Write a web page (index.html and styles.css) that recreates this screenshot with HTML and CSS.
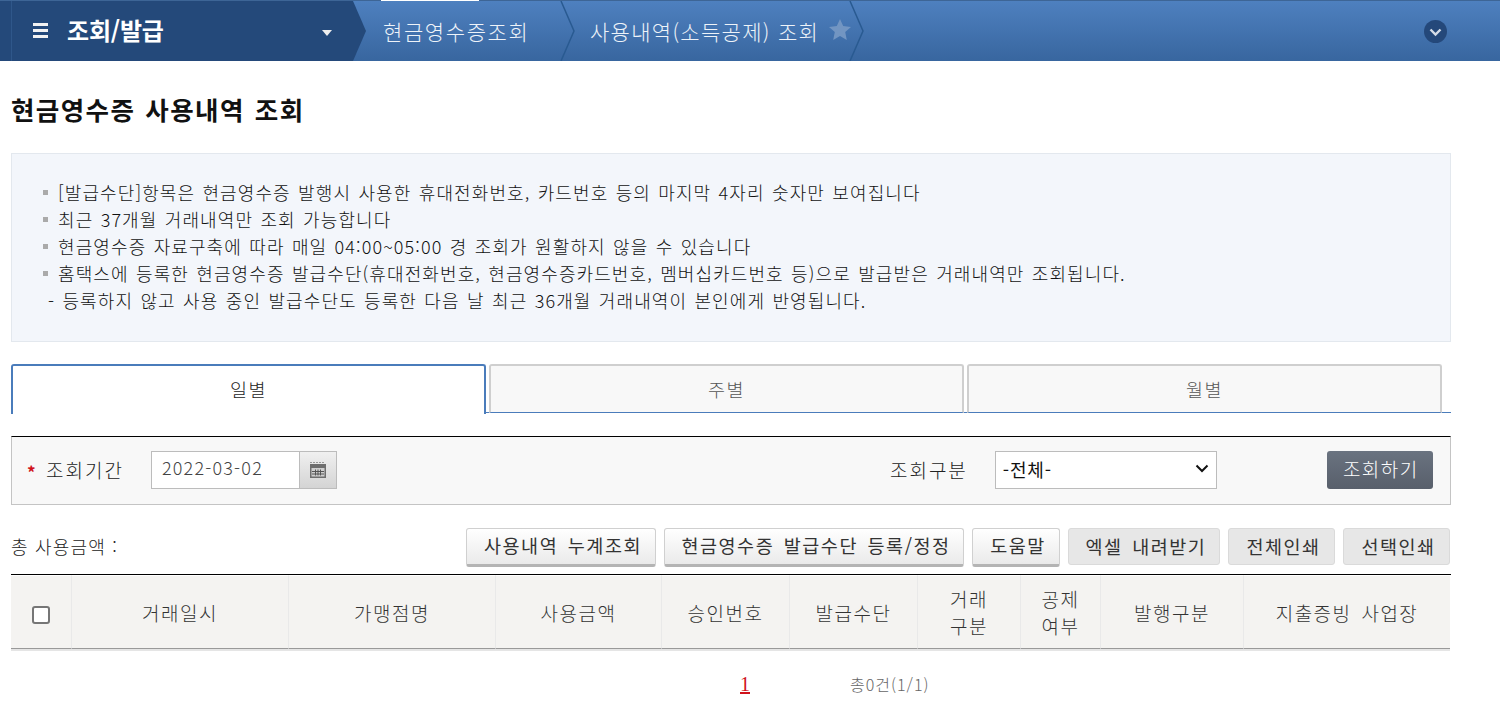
FILE: index.html
```html
<!DOCTYPE html>
<html lang="ko">
<head>
<meta charset="utf-8">
<title>현금영수증 사용내역 조회</title>
<link rel="stylesheet" href="styles.css">
</head>
<body>
<header class="topbar">
  <div class="menu">
    <span class="burger"><i></i><i></i><i></i></span>
    <span class="menu-title">조회/발급</span>
    <span class="caret"></span>
    <svg class="menu-tip" width="14" height="60" viewBox="0 0 14 60"><path d="M0 0 L13 30 L0 60 Z" fill="#24497a"/></svg>
  </div>
  <div class="crumb crumb-a">
    <span>현금영수증조회</span>
    <svg class="sep" width="16" height="60" viewBox="0 0 16 60"><path d="M1 0 L14 30 L1 60" fill="none" stroke="#295a91" stroke-width="1.5"/></svg>
  </div>
  <div class="crumb crumb-b">
    <span>사용내역(소득공제) 조회</span>
    <svg class="star" width="22" height="21" viewBox="0 0 22 21"><path d="M11 0 L14.2 7 L22 7.9 L16.2 13 L17.8 21 L11 17 L4.2 21 L5.8 13 L0 7.9 L7.8 7 Z" fill="#7295c2"/></svg>
    <svg class="sep" width="16" height="60" viewBox="0 0 16 60"><path d="M1 0 L14 30 L1 60" fill="none" stroke="#295a91" stroke-width="1.5"/></svg>
  </div>
  <svg class="more" width="23" height="23" viewBox="0 0 23 23"><circle cx="11.5" cy="11.5" r="11.5" fill="#24487a"/><path d="M6.5 9.5 L11.5 14.5 L16.5 9.5" fill="none" stroke="#d5dde8" stroke-width="2.4"/></svg>
</header>
<main class="page">
  <h1 class="title">현금영수증 사용내역 조회</h1>
  <section class="notice">
    <ul>
      <li>[발급수단]항목은 현금영수증 발행시 사용한 휴대전화번호, 카드번호 등의 마지막 4자리 숫자만 보여집니다</li>
      <li>최근 37개월 거래내역만 조회 가능합니다</li>
      <li>현금영수증 자료구축에 따라 매일 04:00~05:00 경 조회가 원활하지 않을 수 있습니다</li>
      <li>홈택스에 등록한 현금영수증 발급수단(휴대전화번호, 현금영수증카드번호, 멤버십카드번호 등)으로 발급받은 거래내역만 조회됩니다.</li>
      <li class="sub">- 등록하지 않고 사용 중인 발급수단도 등록한 다음 날 최근 36개월 거래내역이 본인에게 반영됩니다.</li>
    </ul>
  </section>
  <nav class="tabs">
    <a class="tab on">일별</a>
    <a class="tab">주별</a>
    <a class="tab">월별</a>
  </nav>
  <section class="search">
    <span class="req">*</span>
    <label class="lbl">조회기간</label>
    <span class="datefield">2022-03-02</span>
    <span class="calbtn">
      <svg width="18" height="18" viewBox="0 0 18 18"><rect x="1" y="3" width="16" height="14" fill="#6e6e6e"/><rect x="2.5" y="7" width="13" height="8.5" fill="#cfcfcf"/><path d="M3 10.5h12M3 13h12M6.5 8.5v6M9 8.5v6M11.5 8.5v6" stroke="#555" stroke-width="1"/><path d="M2 1v1M5 1v1M8 1v1M11 1v1M14 1v1" stroke="#777" stroke-width="1.4"/></svg>
    </span>
    <label class="lbl lbl-type">조회구분</label>
    <span class="selectbox">-전체-
      <svg width="14" height="9" viewBox="0 0 14 9"><path d="M1.5 1.5 L7 7 L12.5 1.5" fill="none" stroke="#111" stroke-width="2"/></svg>
    </span>
    <button class="go">조회하기</button>
  </section>
  <div class="toolbar">
    <span class="total">총 사용금액 :</span>
    <button class="btn w190">사용내역 누계조회</button>
    <button class="btn w300">현금영수증 발급수단 등록/정정</button>
    <button class="btn w88">도움말</button>
    <button class="btn flat w152">엑셀 내려받기</button>
    <button class="btn flat w107">전체인쇄</button>
    <button class="btn flat w107">선택인쇄</button>
  </div>
  <div class="gridwrap">
    <table class="grid">
      <thead>
        <tr>
          <th class="c0"><span class="check"></span></th>
          <th class="c1">거래일시</th>
          <th class="c2">가맹점명</th>
          <th class="c3">사용금액</th>
          <th class="c4">승인번호</th>
          <th class="c5">발급수단</th>
          <th class="c6">거래<br>구분</th>
          <th class="c7">공제<br>여부</th>
          <th class="c8">발행구분</th>
          <th class="c9">지출증빙 사업장</th>
        </tr>
      </thead>
    </table>
  </div>
  <div class="pager">
    <a class="pnum">1</a>
    <span class="pinfo">총0건(1/1)</span>
  </div>
</main>
</body>
</html>
```
FILE: styles.css
```css
* { box-sizing: border-box; }
html, body { margin: 0; padding: 0; background: #fff; }
body {
  font-family: "Noto Sans CJK KR", "Liberation Sans", sans-serif;
  color: #222;
  overflow: hidden;
  font-size: 18px;
}
.topbar {
  position: relative;
  display: flex;
  height: 61px;
  background: linear-gradient(#4e80bf, #38669f);
  border-top: 1px solid #3d6596;
  color: #fff;
}
.topbar::before {
  content: "";
  position: absolute;
  left: 381px;
  top: -1px;
  width: 98px;
  height: 1px;
  background: #fff;
}
.menu {
  position: relative;
  display: flex;
  align-items: center;
  width: 353px;
  padding: 0 0 2px 33px;
  background: #24497a;
  border-left: 11px solid #24497a;
  box-shadow: inset 1px 0 0 #2f578a;
}
.burger { display: flex; flex-direction: column; gap: 3px; width: 15px; margin-left: -11px; }
.burger i { display: block; height: 3px; background: #f2f2f2; }
.menu-title { margin-left: 19px; font-size: 24px; font-weight: 700; letter-spacing: -0.2px; line-height: 1; }
.caret {
  position: absolute;
  left: 311px;
  top: 29px;
  border-left: 5.5px solid transparent;
  border-right: 5.5px solid transparent;
  border-top: 6px solid #eee;
}
.menu-tip { position: absolute; left: 342px; top: 0; }
.crumb {
  position: relative;
  display: flex;
  align-items: center;
  font-size: 21px;
  font-weight: 300;
  letter-spacing: 1.3px;
  color: #eef3f9;
  line-height: 1;
}
.crumb-a { width: 208px; margin-left: 13px; padding-left: 17px; letter-spacing: 1.6px; }
.crumb-b { width: 289px; padding-left: 16px; }
.sep { position: absolute; right: -2px; top: 0; }
.star { position: absolute; left: 255px; top: 18px; }
.more { margin: 19px 0 0 561px; }

.page { width: 1440px; margin-left: 11px; }
.title {
  margin: 29px 0 0;
  height: 37px;
  font-size: 25.5px;
  line-height: 37px;
  font-weight: 700;
  letter-spacing: 1.4px;
  word-spacing: 1.5px;
  color: #111;
}
.notice {
  margin-top: 26px;
  height: 189px;
  padding: 25px 0 0 31px;
  background: #f3f6fb;
  border: 1px solid #e3e8ee;
}
.notice ul { margin: 0; padding: 0; list-style: none; }
.notice li {
  position: relative;
  height: 27px;
  line-height: 27px;
  padding-left: 15px;
  font-size: 18px;
  font-weight: 300;
  letter-spacing: 1.1px;
  word-spacing: 1.2px;
  color: #111;
  white-space: nowrap;
}
.notice li::before {
  content: "";
  position: absolute;
  left: 0;
  top: 11px;
  width: 5px;
  height: 5px;
  background: #aaa;
}
.notice li.sub { padding-left: 5px; }
.notice li.sub::before { display: none; }

.tabs {
  display: flex;
  gap: 3px;
  height: 49px;
  margin-top: 22px;
  border-bottom: 1px solid #4a7cbb;
}
.tab {
  width: 475px;
  height: 49px;
  line-height: 46px;
  text-align: center;
  font-size: 18.5px;
  font-weight: 300;
  letter-spacing: 1.5px;
  color: #555;
  background: #f8f8f8;
  border: 2px solid #cfcfcf;
  border-bottom: 1px solid #4a7cbb;
  border-radius: 3px 3px 0 0;
}
.tab.on {
  height: 50px;
  color: #222;
  background: #fff;
  border: 2px solid #4a7cbb;
  border-bottom: 0;
}
.search {
  display: flex;
  align-items: center;
  height: 69px;
  margin-top: 23px;
  padding: 0 0 2px 15px;
  background: #f8f8f8;
  border: 1px solid #c4c4c4;
  border-top: 1px solid #000;
}
.req { width: 19px; color: #d0121b; font-size: 17px; font-weight: 700; line-height: 1; padding-top: 3px; }
.lbl { font-size: 19px; font-weight: 300; letter-spacing: 2px; color: #222; white-space: nowrap; }
.datefield {
  width: 149px;
  height: 38px;
  margin-left: 27px;
  padding-left: 10px;
  line-height: 30px;
  font-size: 18px;
  font-weight: 300;
  letter-spacing: 1.2px;
  color: #444;
  background: #fff;
  border: 1px solid #bcbcbc;
}
.calbtn {
  display: flex;
  align-items: center;
  justify-content: center;
  width: 37px;
  height: 38px;
  background: linear-gradient(#f0f0f0, #d4d4d4);
  border: 1px solid #bcbcbc;
  border-left: 0;
}
.lbl-type { margin-left: 553px; }
.selectbox {
  display: flex;
  align-items: center;
  justify-content: space-between;
  width: 222px;
  height: 38px;
  margin-left: 27px;
  padding: 0 7px 2px;
  font-size: 18px;
  font-weight: 400;
  letter-spacing: 0.8px;
  color: #111;
  background: #fff;
  border: 1px solid #bcbcbc;
}
.go {
  width: 106px;
  height: 38px;
  margin-left: 110px;
  padding: 0 0 2px 2px;
  font: 300 19px "Noto Sans CJK KR", sans-serif;
  letter-spacing: 1.5px;
  color: #fff;
  background: linear-gradient(#6a7380, #585f6b);
  border: 0;
  border-radius: 3px;
}
.toolbar {
  display: flex;
  align-items: center;
  gap: 8px;
  width: 1439px;
  height: 39px;
  margin-top: 23px;
}
.total {
  margin-right: auto;
  margin-top: -4px;
  font-size: 18px;
  font-weight: 300;
  letter-spacing: 1.2px;
  color: #222;
}
.btn {
  height: 39px;
  padding: 0 0 3px 4px;
  font: 400 18.5px "Noto Sans CJK KR", sans-serif;
  letter-spacing: 1.5px;
  word-spacing: 3px;
  color: #333;
  background: linear-gradient(#fff, #eaeaea);
  border: 1px solid #d0d0d0;
  border-bottom: 3px solid #b4b4b4;
  border-radius: 3px;
}
.btn.flat {
  height: 37px;
  margin-top: -2px;
  padding-bottom: 2px;
  background: #e7e7e7;
  border: 1px solid #dadada;
}
.w190 { width: 190px; }
.w300 { width: 300px; }
.w88 { width: 88px; }
.w152 { width: 152px; }
.w107 { width: 107px; }

.gridwrap {
  margin-top: 7px;
  border-top: 1px solid #000;
}
.grid {
  width: 1439px;
  border-collapse: separate;
  border-spacing: 0;
  table-layout: fixed;
}
.grid th {
  height: 74px;
  padding: 0;
  font-size: 19px;
  font-weight: 300;
  line-height: 27px;
  letter-spacing: 1.5px;
  word-spacing: 3px;
  color: #333;
  background: #f4f3f1;
  background-clip: padding-box;
  border-left: 1px solid #e9e9e9;
  border-top: 1px solid #fff;
  border-bottom: 1px solid #999;
  box-shadow: 0 2px 0 #e5e5e5;
}
.grid th:first-child { border-left: 0; }
.c0 { width: 60px; }
.c1 { width: 217px; }
.c2 { width: 207px; }
.c3 { width: 166px; }
.c4 { width: 128px; }
.c5 { width: 128px; }
.c6 { width: 103px; }
.c7 { width: 80px; }
.c8 { width: 143px; }
.c9 { width: 207px; }
.check {
  display: inline-block;
  width: 18px;
  height: 18px;
  vertical-align: middle;
  background: #fff;
  border: 2px solid #767676;
  border-radius: 3px;
}
.pager {
  display: flex;
  align-items: baseline;
  height: 50px;
  padding: 23px 0 0 729px;
}
.pnum { font: 20px "Liberation Serif", serif; color: #d0121b; text-decoration: underline; line-height: 24px; }
.pinfo { margin-left: 100px; font-size: 16px; font-weight: 300; color: #666; letter-spacing: 1px; }
```
